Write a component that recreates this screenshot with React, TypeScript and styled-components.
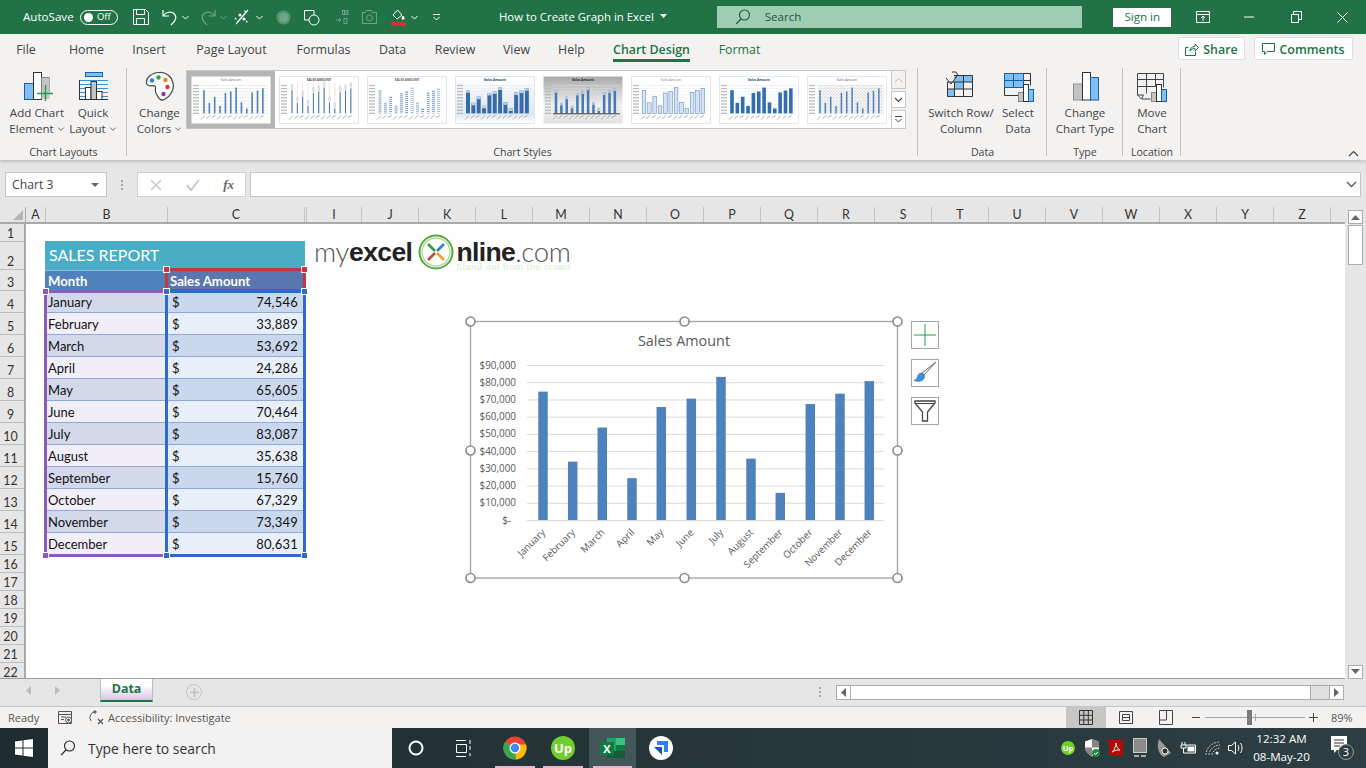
import React from "react";
import styled, { createGlobalStyle } from "styled-components";

const UI = `"Open Sans", "Noto Sans", sans-serif`;
const CELL = `Lato, "Liberation Sans", sans-serif`;
const GREEN = "#217346";

const Global = createGlobalStyle`
  html, body { margin: 0; padding: 0; background: #fff; overflow: hidden; }
  * { box-sizing: border-box; }
  svg { display: block; flex: none; }
`;

const Page = styled.div`
  width: 1366px; height: 768px; overflow: hidden; display: flex; flex-direction: column;
  font-family: ${UI}; color: #444;
`;

/* ---------- title bar ---------- */
const TitleBar = styled.div`
  height: 34px; flex: none; background: ${GREEN}; color: #fff; display: flex; align-items: center; padding-left: 23px;
  font-size: 11.6px;
`;
const AutoSave = styled.span` width: 52px; white-space: nowrap; padding-bottom: 2px; `;
const Toggle = styled.div`
  margin-left: 5px; width: 38px; height: 15px; border: 1px solid #fff; border-radius: 8px; display: flex; align-items: center;
  padding-left: 3px; gap: 4px; font-size: 9.5px; line-height: 1;
  &::before { content: ""; width: 9px; height: 9px; border-radius: 50%; background: #fff; }
`;
const Qat = styled.div<{ $ml: number; $w: number; $dim?: boolean }>`
  margin-left: ${p => p.$ml}px; width: ${p => p.$w}px; display: flex; justify-content: center; opacity: ${p => (p.$dim ? 0.35 : 1)};
`;
const DocTitle = styled.div`
  margin-left: 58px; width: 169px; display: flex; align-items: center; gap: 6px; white-space: nowrap; font-size: 11.4px; padding-bottom: 2px;
`;
const SearchBox = styled.div`
  margin-left: 49px; width: 366px; height: 22px; background: #9fcdb3; color: #1c5a38; display: flex; align-items: center;
  padding: 0 0 1px 18px; gap: 14px; font-size: 11.6px;
`;
const SignIn = styled.div`
  margin-left: 31px; width: 58px; height: 19px; background: #fff; color: ${GREEN}; font-size: 11.6px; display: flex; align-items: center; justify-content: center; padding-bottom: 1px;
`;
const WinBtn = styled.div<{ $ml?: number }>`
  margin-left: ${p => p.$ml || 0}px; width: 46.5px; display: flex; justify-content: center;
`;

/* ---------- tabs ---------- */
const TabsRow = styled.div`
  height: 32px; flex: none; background: #f3f2f1; display: flex; align-items: flex-start; padding-left: 17px; gap: 28px; position: relative;
`;
const Tab = styled.div<{ $w: number; $active?: boolean; $green?: boolean; $ml?: number }>`
  width: ${p => p.$w}px; margin-left: ${p => p.$ml || 0}px; height: 28px; line-height: 32px; text-align: center; white-space: nowrap; display: flex; justify-content: center;
  font-size: 12.4px; color: ${p => (p.$green ? GREEN : "#444")}; font-weight: ${p => (p.$active ? 600 : 400)};
  border-bottom: ${p => (p.$active ? `3px solid ${GREEN}` : "none")};
`;
const TabActions = styled.div`
  margin-left: auto; display: flex; gap: 9px; padding: 3px 13px 0 0;
`;
const ActionBtn = styled.div<{ $w: number }>`
  width: ${p => p.$w}px; height: 23px; background: #fff; border: 1px solid #e1dfdd; border-radius: 2px; color: ${GREEN}; font-size: 12.4px; font-weight: 600;
  display: flex; align-items: center; justify-content: center; gap: 4px; padding-top: 1px;
`;

/* ---------- ribbon ---------- */
const Ribbon = styled.div`
  height: 94px; flex: none; background: #f3f2f1; display: flex; box-shadow: 0 2px 3px rgba(0,0,0,.16); position: relative; z-index: 1;
`;
const Group = styled.div<{ $w: number }>`
  width: ${p => p.$w}px; flex: none; display: flex; flex-direction: column; position: relative;
  &::after { content: ""; position: absolute; right: 0; top: 2px; bottom: 4px; width: 1px; background: #c6c4c2; }
`;
const GroupBody = styled.div<{ $pl?: number }>` flex: 1; display: flex; padding-left: ${p => p.$pl || 0}px; `;
const GroupLabel = styled.div`
  height: 16px; line-height: 16px; text-align: center; font-size: 10.6px; color: #444; white-space: nowrap;
`;
const RBtn = styled.div<{ $w: number }>`
  width: ${p => p.$w}px; flex: none; display: flex; flex-direction: column; align-items: center; padding-top: 5px; font-size: 11.6px; color: #444;
`;
const RIcon = styled.div` height: 32px; margin-bottom: 2px; display: flex; justify-content: center; `;
const RLine = styled.div`
  height: 16px; line-height: 16px; white-space: nowrap; display: flex; align-items: center; gap: 3px;
`;
const Gallery = styled.div`
  margin-top: 4px; width: 720px; height: 59px; border: 1px solid #c8c6c4; border-width: 1px 0 1px 0; border-left: 1px solid #c8c6c4; background: #fff; display: flex; flex: none; position: relative;
`;
const ThumbSlot = styled.div<{ $sel?: boolean }>`
  width: 88px; height: 57px; background: ${p => (p.$sel ? "#b5b5b5" : "#fff")}; display: flex; align-items: center; justify-content: center; flex: none;
`;
const Scroller = styled.div`
  margin-left: auto; width: 15px; display: flex; flex-direction: column; gap: 2px; background: #f3f2f1; margin-top: -1px; margin-bottom: -1px;
`;
const ScrollKey = styled.div<{ $h: number; $dim?: boolean }>`
  height: ${p => p.$h}px; border: 1px solid #c8c6c4; background: ${p => (p.$dim ? "#f3f2f1" : "#fff")}; display: flex; align-items: center; justify-content: center;
`;
const Collapse = styled.div` position: absolute; right: 7px; bottom: 3px; `;

/* ---------- formula bar ---------- */
const FormulaBar = styled.div`
  height: 47px; flex: none; background: #e6e6e6; display: flex; align-items: flex-start; padding: 12px 5px 0; 
`;
const NameBox = styled.div`
  width: 102px; height: 25px; background: #fff; border: 1px solid #c6c6c6; display: flex; align-items: center; justify-content: space-between;
  padding: 0 7px 0 6px; font-size: 12.2px; color: #444;
`;
const Caret = styled.span`
  width: 0; height: 0; border-left: 4px solid transparent; border-right: 4px solid transparent; border-top: 4px solid #666;
`;
const Grip = styled.div`
  width: 30px; height: 25px; display: flex; flex-direction: column; align-items: center; justify-content: center; gap: 2px;
  & > i { width: 2px; height: 2px; background: #a6a6a6; }
`;
const FxBox = styled.div`
  width: 109px; height: 25px; background: #fff; border: 1px solid #d0d0d0; display: flex; align-items: center; justify-content: space-between; padding: 0 11px 0 12px;
  font-family: "Liberation Serif", serif; font-style: italic; font-weight: 700; font-size: 13px; color: #666;
`;
const FormulaInput = styled.div`
  margin-left: 4px; flex: 1; height: 25px; background: #fff; border: 1px solid #c6c6c6; display: flex; align-items: center; justify-content: flex-end; padding-right: 3px;
`;

/* ---------- sheet ---------- */
const SheetArea = styled.div` height: 472px; flex: none; display: flex; background: #fff; `;
const SheetMain = styled.div` width: 1345px; flex: none; display: flex; flex-direction: column; overflow: hidden; border-bottom: 1px solid #9e9e9e; `;
const ColRow = styled.div`
  height: 17px; flex: none; display: flex; background: #e6e6e6; border-bottom: 2px solid #a9a9a9; overflow: hidden;
`;
const Corner = styled.div`
  width: 26px; flex: none; position: relative; border-right: 1px solid #a9a9a9;
  &::after { content: ""; position: absolute; right: 2px; bottom: 2px; border-left: 10px solid transparent; border-bottom: 10px solid #b5b5b5; }
`;
const ColHead = styled.div<{ $w: number }>`
  width: ${p => p.$w}px; flex: none; text-align: center; font: 12.4px/15px ${CELL}; color: #333; border-right: 1px solid #c4c4c4;
`;
const SheetBody = styled.div` flex: 1; display: flex; min-height: 0; `;
const RowHeads = styled.div`
  width: 26px; flex: none; background: #e6e6e6; border-right: 2px solid #a9a9a9; display: flex; flex-direction: column;
`;
const RowHead = styled.div<{ $h: number }>`
  height: ${p => p.$h}px; flex: none; border-bottom: 1px solid #bdbdbd; text-align: center; font: 12.4px/1 ${CELL}; color: #333;
  display: flex; align-items: flex-end; justify-content: center; padding-bottom: 1px; padding-right: 3px;
`;
const Canvas = styled.div` position: relative; flex: 1; overflow: hidden; background: #fff; padding: 17px 0 0 19px; `;
const Report = styled.div`
  width: 260px; display: grid; grid-template-columns: 120px 140px; grid-template-rows: 29px 21px repeat(12, 22px); font: 13px/1 ${CELL}; color: #111;
`;
const ReportTitle = styled.div`
  grid-column: 1 / span 2; background: #4bacc6; color: #fff; font-size: 16px; display: flex; align-items: center; padding: 0 0 2px 4px;
`;
const HeadCell = styled.div<{ $alt?: boolean }>`
  background: ${p => (p.$alt ? "#5b76ae" : "#4f81bd")}; color: #fff; font-weight: 700; font-size: 13.2px; display: flex; align-items: center; padding: 1px 0 0 3px; border-top: 1px solid #9bb7da;
  margin-left: ${p => (p.$alt ? 2 : 0)}px; margin-right: ${p => (p.$alt ? 2 : 0)}px;
`;
const NameCell = styled.div<{ $odd: boolean }>`
  background: ${p => (p.$odd ? "#d3d8ea" : "#f1eef8")}; border-bottom: 1px solid #8eaadb; display: flex; align-items: center; padding: 2px 0 0 3px;
`;
const AmountCell = styled.div<{ $odd: boolean }>`
  background: ${p => (p.$odd ? "#c9d8ec" : "#e8eff9")}; border-bottom: 1px solid #8eaadb; display: flex; align-items: center; justify-content: space-between; padding: 2px 5px 0 5px; margin: 0 2px; letter-spacing: .2px;
`;
const SelBox = styled.div<{ $c: string; $l: number; $t: number; $w: number; $h: number; $noRight?: boolean }>`
  position: absolute; left: ${p => p.$l}px; top: ${p => p.$t}px; width: ${p => p.$w}px; height: ${p => p.$h}px; border: 3px solid ${p => p.$c};
  ${p => (p.$noRight ? "border-right: none;" : "")} pointer-events: none;
`;
const SelHandle = styled.i<{ $c: string; $x: "l" | "r"; $y: "t" | "b" }>`
  position: absolute; width: 7px; height: 7px; background: ${p => p.$c}; border: 1px solid #fff;
  ${p => (p.$x === "l" ? "left: -5px;" : "right: -5px;")} ${p => (p.$y === "t" ? "top: -5px;" : "bottom: -5px;")}
`;
const Logo = styled.div`
  position: absolute; left: 288px; top: 11px; width: 262px; height: 34px; display: flex; align-items: center; font-family: "Liberation Sans", sans-serif; font-size: 26.5px; line-height: 20px; letter-spacing: -.6px; color: #222;
`;
const Thin = styled.span` font-family: Lato, sans-serif; font-weight: 300; font-size: 27.5px; letter-spacing: -.3px; color: #555; `;
const Bold = styled.span` font-weight: 700; color: #222; `;
const Tagline = styled.span`
  position: absolute; left: 142px; top: 27px; font-size: 9px; letter-spacing: .6px; color: #d3ecd3; white-space: nowrap; line-height: 10px;
`;
const ChartFloat = styled.div` position: absolute; left: 439px; top: 92px; width: 480px; height: 270px; `;
const ChartBtn = styled.div<{ $top: number }>`
  position: absolute; left: 446px; top: ${p => p.$top}px; width: 28px; height: 28px; background: #fff; border: 1px solid #a6a6a6; display: flex; align-items: center; justify-content: center;
`;
const VScroll = styled.div`
  width: 21px; flex: none; background: #e6e6e6; display: flex; flex-direction: column; align-items: center; padding: 3px 0 0 0;
`;
const VBtn = styled.div`
  width: 15px; height: 14px; flex: none; background: #fff; border: 1px solid #ababab; display: flex; align-items: center; justify-content: center;
`;
const VThumb = styled.div` width: 15px; height: 40px; flex: none; margin-top: 1px; background: #fff; border: 1px solid #ababab; `;
const VTrack = styled.div` flex: 1; `;

/* ---------- sheet tabs ---------- */
const SheetTabs = styled.div`
  height: 28px; flex: none; background: #e6e6e6; display: flex; align-items: flex-start; border-bottom: 1px solid #c6c6c6; position: relative;
`;
const NavSlot = styled.div` width: 100px; height: 22px; display: flex; align-items: center; padding-left: 26px; gap: 22px; flex: none; `;
const DataTab = styled.div`
  width: 53px; height: 23px; background: linear-gradient(#fff 30%, #d7c6e6); border-bottom: 2px solid ${GREEN}; border-left: 1px solid #bdbdbd; border-right: 1px solid #bdbdbd;
  color: ${GREEN}; font: 700 12.4px/20px ${UI}; text-align: center;
`;
const AddSheet = styled.div`
  margin-left: 33px; margin-top: 5px; width: 16px; height: 16px; border-radius: 50%; border: 1.5px solid #c4c4c4; color: #c0c0c0; display: flex; align-items: center; justify-content: center;
`;
const SplitDots = styled.div`
  margin-left: 617px; margin-top: 8px; width: 3px; display: flex; flex-direction: column; gap: 2px;
  & > i { width: 2px; height: 2px; background: #a6a6a6; }
`;
const HScroll = styled.div`
  margin-left: 14px; margin-top: 6px; width: 508px; height: 15px; display: flex; border: 1px solid #ababab; background: #e0e0e0;
`;
const HEnd = styled.div` width: 14px; background: #fff; display: flex; align-items: center; justify-content: center; flex: none; border-right: 1px solid #ababab; `;
const HEndR = styled(HEnd)` border-right: none; border-left: 1px solid #ababab; margin-left: auto; `;
const HThumb = styled.div` width: 460px; background: #fff; border-right: 1px solid #ababab; flex: none; `;

/* ---------- status ---------- */
const StatusBar = styled.div`
  height: 21px; flex: none; background: #f3f2f1; display: flex; align-items: center; padding-left: 8px; font-size: 11px; color: #555; position: relative;
`;
const StatusText = styled.span<{ $ml?: number; $w?: number }>` margin-left: ${p => p.$ml || 0}px; white-space: nowrap; width: ${p => (p.$w ? p.$w + "px" : "auto")}; `;
const ViewTools = styled.div` margin-left: auto; width: 300px; height: 21px; display: flex; align-items: center; `;
const ViewBtn = styled.div<{ $on?: boolean }>`
  width: 40px; height: 21px; background: ${p => (p.$on ? "#c8c6c4" : "transparent")}; display: flex; align-items: center; justify-content: center; flex: none;
`;
const ZoomSlider = styled.div`
  width: 100px; height: 1px; background: #a6a6a6; position: relative; margin: 0 4px 0 5px; flex: none;
  &::before { content: ""; position: absolute; left: 42px; top: -7px; width: 5px; height: 15px; background: #7a7a7a; }
  &::after { content: ""; position: absolute; left: 50px; top: -3px; width: 1px; height: 7px; background: #a6a6a6; }
`;

/* ---------- taskbar ---------- */
const Taskbar = styled.div`
  height: 40px; flex: none; background: linear-gradient(90deg, #1e2b2f 0%, #243437 40%, #2d3f43 100%); display: flex; align-items: center; color: #fff; position: relative;
`;
const WinKey = styled.div` width: 48px; height: 40px; display: flex; align-items: center; justify-content: center; flex: none; `;
const TaskSearch = styled.div`
  width: 344px; height: 40px; background: #f2f2f2; color: #333; display: flex; align-items: center; padding-left: 12px; gap: 12px; font-size: 13.9px; flex: none;
`;
const TaskItem = styled.div<{ $w: number; $on?: boolean; $pink?: boolean; $ml?: number }>`
  width: ${p => p.$w}px; height: 40px; margin-left: ${p => p.$ml || 0}px; flex: none; display: flex; align-items: center; justify-content: center; position: relative;
  background: ${p => (p.$on ? "#435659" : "transparent")};
  ${p => (p.$pink ? `&::after { content: ""; position: absolute; left: 4px; right: 4px; bottom: 0; height: 2px; background: #eeb4cc; }` : "")}
`;
const Tray = styled.div` margin-left: auto; display: flex; align-items: center; height: 40px; `;
const TrayItem = styled.div<{ $w: number }>` width: ${p => p.$w}px; display: flex; justify-content: center; flex: none; `;
const Clock = styled.div`
  width: 69px; flex: none; text-align: center; font-size: 11.6px; line-height: 18px; white-space: nowrap;
`;
const Notify = styled.div` width: 50px; flex: none; display: flex; justify-content: center; padding-left: 4px; `;

/* ---------- icons ---------- */
const Chev = ({ c = "#fff", s = 9 }: { c?: string; s?: number }) => (
  <svg width={s} height={s} viewBox="0 0 9 9"><path d="M1.5 3l3 3 3-3" fill="none" stroke={c} strokeWidth="1" /></svg>
);
const SaveIcon = () => (
  <svg width="16" height="16" viewBox="0 0 16 16" fill="none" stroke="#fff"><path d="M.5.5h12l3 3v12H.5z" /><path d="M3.5.5v5h8v-5M3.5 15.5v-6h8v6" /></svg>
);
const UndoIcon = ({ flip }: { flip?: boolean }) => (
  <svg width="16" height="17" viewBox="0 0 16 17" fill="none" stroke="#fff" strokeWidth="1.2" style={flip ? { transform: "scaleX(-1)" } : undefined}>
    <path d="M1 1v6h6M1.5 6.5C4 3 9 2 12 4.5c3 3 2.5 7-3 11.5" />
  </svg>
);
const TouchIcon = () => (
  <svg width="16" height="16" viewBox="0 0 16 16" fill="none" stroke="#fff" strokeWidth="1.2"><path d="M14 1L2 15" /><circle cx="6" cy="6" r="1" fill="#fff" /><circle cx="10" cy="10" r="1" fill="#fff" /><path d="M1 9l2 2M10 2l3 1M12 12l2 2" strokeDasharray="2 1" /></svg>
);
const ShapesIcon = () => (
  <svg width="17" height="17" viewBox="0 0 17 17" fill="none" stroke="#fff"><path d="M6 11H1.5V1.5H11V6" /><circle cx="11" cy="11" r="5" /></svg>
);
const NumIcon = () => (
  <svg width="14" height="16" viewBox="0 0 14 16" fill="none" stroke="#fff"><path d="M1 11h5m-2-2l2 2-2 2" /><rect x="7.5" y="1.5" width="2" height="4" /><rect x="11" y="1.5" width="2" height="4" /><rect x="9" y="9.5" width="3" height="5" /></svg>
);
const CameraIcon = () => (
  <svg width="15" height="14" viewBox="0 0 15 14" fill="none" stroke="#fff"><path d="M.5 2.500h3l1-2h5l1 2h4v11H.5z" /><circle cx="7.500" cy="8" r="3" /></svg>
);
const FillIcon = () => (
  <svg width="15" height="17" viewBox="0 0 15 17" fill="none" stroke="#fff"><path d="M6.500 1L2 6l4 4 5-4z" /><path d="M12 7c1 1.500 1.500 2.400 1 3s-2 .4-2-.6z" fill="#fff" /><rect x="0" y="13" width="15" height="4" fill="#d13438" stroke="none" /></svg>
);
const QatMore = () => (
  <svg width="9" height="9" viewBox="0 0 9 9" fill="none" stroke="#fff"><path d="M1 1.500h7M1.500 4l3 3 3-3" /></svg>
);
const SearchGlass = ({ c = "#1c5a38", s = 16 }: { c?: string; s?: number }) => (
  <svg width={s} height={s} viewBox="0 0 16 16" fill="none" stroke={c} strokeWidth="1.100"><circle cx="9.500" cy="6" r="5" /><path d="M6 10L1 15" /></svg>
);
const IconRibbonMode = () => (
  <svg width="14" height="12" viewBox="0 0 14 12" fill="none" stroke="#fff"><path d="M.5.500h13v11H.5zM.5 3.500h13M7 10V5.500M5 7l2-2 2 2" /></svg>
);
const IconMin = () => <svg width="11" height="3" viewBox="0 0 11 3"><path d="M0 1h10" stroke="#fff" /></svg>;
const IconRestore = () => (
  <svg width="11" height="12" viewBox="0 0 11 12" fill="none" stroke="#fff"><path d="M.5 3.500h7v8h-7zM2.500 3V.5h8v8H8" /></svg>
);
const IconClose = () => <svg width="11" height="11" viewBox="0 0 11 11"><path d="M.5.5l10 10M10.500.5l-10 10" stroke="#fff" /></svg>;
const ShareIcon = () => (
  <svg width="14" height="14" viewBox="0 0 14 14" fill="none" stroke={GREEN}><path d="M.5 5.500v8h10v-4M.5 5.500h3M5 9c0-3 2-4.500 5-4.500V2l3.500 3.500L10 9V6.500C8 6.500 6 7 5 9z" /></svg>
);
const CommentIcon = () => (
  <svg width="13" height="13" viewBox="0 0 13 13" fill="none" stroke={GREEN}><path d="M.5.5h12v8H5l-2.500 3v-3h-2z" /></svg>
);

const AddChartIcon = () => (
  <svg width="32" height="32" viewBox="0 0 32 32">
    <rect x="3.500" y="12.500" width="9" height="16" fill="#83bef0" stroke="#0f62ae" />
    <rect x="12.500" y="1.500" width="8" height="27" fill="#fff" stroke="#333" />
    <path d="M20.500 6.500h8v15" fill="#c4c4c4" stroke="#8a8a8a" />
    <rect x="20.500" y="7" width="8" height="21" fill="#c4c4c4" />
    <path d="M24.500 14v16M16 22.500h17" stroke="#1f9a4f" strokeWidth="1.400" />
  </svg>
);
const QuickLayoutIcon = () => (
  <svg width="32" height="32" viewBox="0 0 32 32" fill="none">
    <rect x="8.500" y="1.500" width="17" height="4" fill="#83bef0" stroke="#0f62ae" />
    <path d="M2 13.500h29M2 17.500h29M2 9.500h29M2 21.500h29M2 25.500h29" stroke="#3d8fd8" />
    <path d="M2.500 9v20M2 28.500h29" stroke="#333" />
    <rect x="8.500" y="16.500" width="5.500" height="12" fill="#fff" stroke="#333" />
    <rect x="14" y="10.500" width="5.500" height="18" fill="#c4c4c4" stroke="#333" />
    <rect x="19.500" y="20.500" width="5.500" height="8" fill="#fff" stroke="#333" />
  </svg>
);
const PaletteIcon = () => (
  <svg width="30" height="31" viewBox="0 0 30 31" fill="none">
    <path d="M14 1.500C6 2 1 7 1.500 12c.4 3 3 3 5.500 2.700 3-.2 4 1 3.500 3.300-.6 3 .5 4.500 2 7 1.500 3 4 5 7 3.500 6-3 10-10 8.500-16.500C26.500 5 21 1 14 1.500z" fill="#fff" stroke="#444" strokeWidth="1.200" />
    <circle cx="7" cy="9.500" r="2.200" fill="#2f7fd1" /><circle cx="13.500" cy="6.500" r="2.200" fill="#2fa14a" />
    <circle cx="20.500" cy="9" r="2.200" fill="#e8821e" /><circle cx="22.500" cy="16" r="2.200" fill="#e23434" /><circle cx="18.500" cy="23" r="2.200" fill="#8a3bb0" />
  </svg>
);
const SwitchIcon = () => (
  <svg width="32" height="32" viewBox="0 0 32 32" fill="none">
    <path d="M18 4h9.500v7h-9.500zM9 11h9.500v7H9zM2 18h7.500v7.500H2z" fill="#83bef0" /><path d="M9 4h9v7H9z" fill="#83bef0" />
    <path d="M2.500 11v14.500h25V4.500H9M2.500 18h25M2.500 11h25M9.500 11v14.500M18.500 4.500v21" stroke="#333" />
    <path d="M1 7l5 6 6-8M7 1h4l2 3-3 3" stroke="#333" fill="none" />
  </svg>
);
const SelectDataIcon = () => (
  <svg width="32" height="32" viewBox="0 0 32 32" fill="none">
    <path d="M2 2h20v15H2z" fill="#83bef0" />
    <path d="M2.500 2.500h26v12M2.500 2.500v22h14M2.500 9.500h26M2.500 16.500h16M11.500 2.500v14M21.500 2.500v12" stroke="#333" />
    <path d="M2.500 2.500h19v14h-19zM2.500 9.500h19M11.500 2.500v14" stroke="#0f62ae" />
    <rect x="16.500" y="21.500" width="5" height="9" fill="#c4c4c4" stroke="#888" />
    <rect x="21.500" y="13.500" width="5" height="17" fill="#fff" stroke="#333" />
    <rect x="26.500" y="18.500" width="5" height="12" fill="#83bef0" stroke="#0f62ae" />
  </svg>
);
const ChartTypeIcon = () => (
  <svg width="32" height="32" viewBox="0 0 32 32">
    <rect x="4.500" y="13" width="9" height="16" fill="#c4c4c4" stroke="#8a8a8a" />
    <rect x="13.500" y="1.500" width="8" height="27.500" fill="#fff" stroke="#333" />
    <rect x="21.500" y="6.500" width="8" height="22.500" fill="#83bef0" stroke="#0f62ae" />
  </svg>
);
const MoveChartIcon = () => (
  <svg width="32" height="32" viewBox="0 0 32 32" fill="none">
    <path d="M1.500 2.500h26v14M1.500 2.500V24l4 4h9M1.500 24h6l-2 4M1.500 8.500h26M1.500 15.500h18M10.500 2.500v20M19.500 2.500v13" stroke="#444" />
    <rect x="15.500" y="21.500" width="5" height="9" fill="#c4c4c4" stroke="#888" />
    <rect x="20.500" y="13.500" width="5" height="17" fill="#fff" stroke="#333" />
    <rect x="25.500" y="18.500" width="5" height="12" fill="#83bef0" stroke="#0f62ae" />
  </svg>
);

/* ---------- thumbnails ---------- */
const VALUES = [74546, 33889, 53692, 24286, 65605, 70464, 83087, 35638, 15760, 67329, 73349, 80631];
const MONTHS = ["January","February","March","April","May","June","July","August","September","October","November","December"];

type Look = { bg: string; title: string; tc: string; w: number; fill: string; stroke?: string; grid: string; dash?: string; hatch?: boolean; drop?: boolean; cap?: boolean; axis?: string; frame?: string; bold?: boolean };
const LOOKS: Look[] = [
  { bg: "#fff", title: "Sales Amount", tc: "#777", w: 1.600, fill: "#4f81bd", grid: "#dcdcdc" },
  { bg: "#fff", title: "SALES AMOUNT", tc: "#555", w: 1, fill: "#3d70b4", grid: "#fff", drop: true, frame: "#dfe6ef", bold: true },
  { bg: "#fff", title: "SALES AMOUNT", tc: "#666", w: 2.400, fill: "#4f81bd", grid: "#fff", dash: "1.300 .7", frame: "#dfe6ef", bold: true },
  { bg: "url(#g4)", title: "Sales Amount", tc: "#345", w: 4, fill: "#366ba8", grid: "#e4e8ee", cap: true, bold: true, frame: "#dfe6ef" },
  { bg: "url(#g5)", title: "Sales Amount", tc: "#222", w: 2.500, fill: "#4479b4", grid: "#d8d8d8", cap: true, axis: "#333", bold: true },
  { bg: "#fff", title: "Sales Amount", tc: "#888", w: 3.600, fill: "#d5e3f3", stroke: "#4f81bd", grid: "#e8e8e8", frame: "#dfe6ef" },
  { bg: "#fff", title: "Sales Amount", tc: "#1f4e86", w: 3.600, fill: "#336cb0", grid: "#dbe8f5", frame: "#dfe9f7", bold: true },
  { bg: "#fff", title: "Sales Amount", tc: "#666", w: 1.500, fill: "#4f81bd", grid: "#d8d8d8", hatch: true, frame: "#dfe9f7" },
];
const Thumb = ({ look }: { look: Look }) => (
  <svg width="80" height="48" viewBox="0 0 80 48">
    <defs>
      <linearGradient id="g4" x1="0" y1="0" x2="0" y2="1"><stop offset="0" stopColor="#fff" /><stop offset=".8" stopColor="#dfe7f1" /><stop offset="1" stopColor="#fff" /></linearGradient>
      <linearGradient id="g5" x1="0" y1="0" x2="0" y2="1"><stop offset="0" stopColor="#a9a9a9" /><stop offset=".6" stopColor="#f2f2f2" /><stop offset="1" stopColor="#e2e2e2" /></linearGradient>
      <pattern id="hatch" width="3" height="3" patternUnits="userSpaceOnUse"><path d="M0 0l3 3M3 0L0 3" stroke="#c9c9c9" strokeWidth=".4" /></pattern>
    </defs>
    <rect x=".5" y=".5" width="79" height="47" fill={look.bg} stroke={look.frame || "none"} />
    <text x="40" y="5" textAnchor="middle" fontSize="3.200" fontFamily={UI} fontWeight={look.bold ? 700 : 400} fill={look.tc}>{look.title}</text>
    {look.hatch && <rect x="11" y="9" width="65" height="28" fill="url(#hatch)" />}
    {Array.from({ length: 10 }, (_, i) => (
      <React.Fragment key={i}>
        <path d={`M10 ${9.500 + i * 3.100}H77`} stroke={look.grid} strokeWidth=".6" />
        <rect x="2" y={8.800 + i * 3.100} width="6" height="1.300" fill="#bbb" />
      </React.Fragment>
    ))}
    {VALUES.map((v, i) => {
      const x = 13 + i * 5.350;
      const h = (v / 90000) * 28;
      const top = 37.400 - h;
      return (
        <React.Fragment key={i}>
          {look.drop && <path d={`M${x} 7V37`} stroke="#c8c8c8" strokeWidth=".4" />}
          <rect x={x - look.w / 2} y={top} width={look.w} height={h} fill={look.fill} stroke={look.stroke || "none"} strokeWidth=".5" />
          {look.dash && <path d={`M${x} ${top}V37.400`} stroke="#fff" strokeWidth={look.w} strokeDasharray={look.dash} strokeDashoffset="-1.300" />}
          {look.drop && <rect x={x - 1.200} y={top - 6} width="2.400" height="5" fill="#ddd" />}
          {look.cap && <rect x={x - look.w / 2} y={top} width={look.w} height="2.500" fill="#b9cde6" />}
          <path d={`M${x + 1} 39.500L${x - 3} ${43.500 - (i % 3)}`} stroke="#a8a8a8" strokeWidth=".9" />
        </React.Fragment>
      );
    })}
    {look.axis && <path d="M10 37.800H77" stroke={look.axis} strokeWidth=".9" />}
  </svg>
);

/* ---------- chart ---------- */
const OX = 465, OY = 316;
const ChartDrawing = () => {
  const yFor = (v: number) => 520 - (v / 90000) * 155 - OY;
  const xs = [543, 572.700, 602.300, 632, 661.300, 691.300, 721, 751, 780.300, 810.300, 840, 869.300];
  const handles = [[470.500, 321.500], [684.500, 321.500], [897.500, 321.500], [470.500, 450.500], [897.500, 450.500], [470.500, 578], [684.500, 578], [897.500, 578]];
  return (
    <svg width="440" height="270" viewBox="0 0 440 270" style={{ position: "absolute", left: 0, top: 0 }}>
      <rect x={470.500 - OX} y={321.500 - OY} width="427" height="256.500" fill="#fff" stroke="#a6a6a6" strokeWidth="1.400" />
      <text x={684 - OX} y={346 - OY} textAnchor="middle" fontSize="14.400" fontFamily={UI} fill="#595959">Sales Amount</text>
      {Array.from({ length: 10 }, (_, i) => {
        const v = (9 - i) * 10000;
        const y = yFor(v);
        return (
          <React.Fragment key={v}>
            <path d={`M${527 - OX} ${y + 0.500}H${884 - OX}`} stroke="#d9d9d9" />
            <text x={(v ? 516 : 511) - OX} y={y + 3.500} textAnchor="end" fontSize="9.900" fontFamily={UI} fill="#595959">{v ? `$${(v / 1000).toFixed(0)},000` : "$-"}</text>
          </React.Fragment>
        );
      })}
      {VALUES.map((v, i) => (
        <rect key={i} x={xs[i] - 4.750 - OX} y={yFor(v)} width="9.500" height={520 - OY - yFor(v)} fill="#4f81bd" />
      ))}
      {MONTHS.map((m, i) => {
        const x = xs[i] + 3 - OX, y = 533 - OY;
        return <text key={m} x={x} y={y} textAnchor="end" fontSize="9.800" fontFamily={UI} fill="#595959" transform={`rotate(-45 ${x} ${y})`}>{m}</text>;
      })}
      {handles.map(([x, y]) => (
        <circle key={`${x}-${y}`} cx={x - OX} cy={y - OY} r="4.500" fill="#fff" stroke="#8f8f8f" strokeWidth="1.700" />
      ))}
    </svg>
  );
};

/* ---------- taskbar icons ---------- */
const WinLogo = () => (
  <svg width="18" height="18" viewBox="0 0 18 18" fill="#fff"><path d="M0 2.500l7.500-1v7H0zM8.500 1.300L18 0v8.500H8.500zM0 9.500h7.500v7L0 15.500zM8.500 9.500H18V18l-9.500-1.300z" /></svg>
);
const ChromeIcon = () => (
  <svg width="24" height="24" viewBox="0 0 24 24">
    <circle cx="12" cy="12" r="11.500" fill="#ea4335" />
    <path d="M12 12L2 18a11.500 11.500 0 0 1 0-12z" fill="#34a853" /><path d="M12 12L2 18a11.500 11.500 0 0 0 11 5.500z" fill="#34a853" />
    <path d="M12 12l1 11.500A11.500 11.500 0 0 0 23 8.500H12z" fill="#fbbc05" />
    <circle cx="12" cy="12" r="5.500" fill="#fff" /><circle cx="12" cy="12" r="4.200" fill="#4285f4" />
  </svg>
);
const UpBadge = ({ s }: { s: number }) => (
  <svg width={s} height={s} viewBox="0 0 24 24">
    <circle cx="12" cy="12" r="12" fill="#6fcf2d" />
    <text x="12" y="16.500" textAnchor="middle" fontSize="13" fontWeight="700" fontFamily={UI} fill="#fff">Up</text>
  </svg>
);
const ExcelIcon = () => (
  <svg width="26" height="24" viewBox="0 0 26 24">
    <rect x="7" y="2" width="18" height="20" fill="#21a366" /><rect x="16" y="2" width="9" height="7" fill="#33c481" /><rect x="7" y="15" width="18" height="7" fill="#185c37" /><rect x="16" y="9" width="9" height="6" fill="#107c41" />
    <rect x="0" y="6" width="14" height="13" fill="#107c41" />
    <text x="7" y="16.500" textAnchor="middle" fontSize="11" fontWeight="700" fontFamily={UI} fill="#fff">X</text>
  </svg>
);
const SnipIcon = () => (
  <svg width="24" height="24" viewBox="0 0 24 24">
    <circle cx="12" cy="12" r="12" fill="#fff" />
    <path d="M8 5h11v11h-4V9H8z" fill="#2f80e8" /><path d="M13 11v8L5 11z" fill="#1559b8" />
  </svg>
);

const rowHeights: [string, number][] = [["1", 18], ["2", 28], ["3", 21], ...Array.from({ length: 12 }, (_, i) => [String(i + 4), 22] as [string, number]), ...Array.from({ length: 7 }, (_, i) => [String(i + 16), 18] as [string, number])];
const columns: [string, number][] = [["A", 20], ["B", 122], ["C", 137], ["", 2], ["I", 55], ..."JKLMNOPQRSTUVWXYZ".split("").map(c => [c, 57] as [string, number]), ["", 57]];
const TABS: [string, number, number][] = [["Home", 35, 6], ["Insert", 32, 1], ["Page Layout", 71, 3], ["Formulas", 53, 2], ["Data", 27, 1], ["Review", 40, 1], ["View", 27, 0], ["Help", 27, 0]];

export default function App() {
  return (
    <Page>
      <Global />
      <TitleBar>
        <AutoSave>AutoSave</AutoSave>
        <Toggle>Off</Toggle>
        <Qat $ml={15} $w={16}><SaveIcon /></Qat>
        <Qat $ml={14} $w={15}><UndoIcon /></Qat>
        <Qat $ml={3} $w={9}><Chev /></Qat>
        <Qat $ml={10} $w={16} $dim><UndoIcon flip /></Qat>
        <Qat $ml={3} $w={9} $dim><Chev /></Qat>
        <Qat $ml={7} $w={15}><TouchIcon /></Qat>
        <Qat $ml={5} $w={9}><Chev /></Qat>
        <Qat $ml={12} $w={15} $dim><svg width="15" height="15" viewBox="0 0 15 15"><circle cx="7.500" cy="7.500" r="7" fill="#fff" opacity=".7" /><circle cx="7.500" cy="7.500" r="4.500" fill="#fff" /></svg></Qat>
        <Qat $ml={12} $w={17}><ShapesIcon /></Qat>
        <Qat $ml={15} $w={14} $dim><NumIcon /></Qat>
        <Qat $ml={14} $w={14} $dim><CameraIcon /></Qat>
        <Qat $ml={15} $w={14}><FillIcon /></Qat>
        <Qat $ml={4} $w={9}><Chev /></Qat>
        <Qat $ml={13} $w={9}><QatMore /></Qat>
        <DocTitle>How to Create Graph in Excel<svg width="7" height="4" viewBox="0 0 7 4"><path d="M0 0h7L3.500 4z" fill="#fff" /></svg></DocTitle>
        <SearchBox><SearchGlass />Search</SearchBox>
        <SignIn>Sign in</SignIn>
        <WinBtn $ml={9}><IconRibbonMode /></WinBtn>
        <WinBtn><IconMin /></WinBtn>
        <WinBtn><IconRestore /></WinBtn>
        <WinBtn><IconClose /></WinBtn>
      </TitleBar>

      <TabsRow>
        <Tab $w={18}>File</Tab>
        {TABS.map(([t, w, ml]) => <Tab key={t} $w={w} $ml={ml}>{t}</Tab>)}
        <Tab $w={77} $active $green>Chart Design</Tab>
        <Tab $w={41} $ml={1} $green>Format</Tab>
        <TabActions>
          <ActionBtn $w={67}><ShareIcon />Share</ActionBtn>
          <ActionBtn $w={99}><CommentIcon />Comments</ActionBtn>
        </TabActions>
      </TabsRow>

      <Ribbon>
        <Group $w={127}>
          <GroupBody $pl={5}>
            <RBtn $w={64}><RIcon><AddChartIcon /></RIcon><RLine>Add Chart</RLine><RLine>Element<Chev c="#555" s={8} /></RLine></RBtn>
            <RBtn $w={48}><RIcon><QuickLayoutIcon /></RIcon><RLine>Quick</RLine><RLine>Layout<Chev c="#555" s={8} /></RLine></RBtn>
          </GroupBody>
          <GroupLabel>Chart Layouts</GroupLabel>
        </Group>
        <Group $w={791}>
          <GroupBody $pl={6}>
            <RBtn $w={53}><RIcon><PaletteIcon /></RIcon><RLine>Change</RLine><RLine>Colors<Chev c="#555" s={8} /></RLine></RBtn>
            <Gallery>
              {LOOKS.map((look, i) => (
                <ThumbSlot key={i} $sel={i === 0}>
                  <Thumb look={look} />
                </ThumbSlot>
              ))}
              <Scroller>
                <ScrollKey $h={20} $dim><svg width="9" height="6" viewBox="0 0 9 6"><path d="M1 5l3.500-3.500L8 5" fill="none" stroke="#bbb" /></svg></ScrollKey>
                <ScrollKey $h={17}><svg width="9" height="6" viewBox="0 0 9 6"><path d="M1 1l3.500 3.500L8 1" fill="none" stroke="#444" strokeWidth="1.200" /></svg></ScrollKey>
                <ScrollKey $h={20}><svg width="9" height="9" viewBox="0 0 9 9"><path d="M1 1.500h7M1.500 4l3 3 3-3" fill="none" stroke="#444" /></svg></ScrollKey>
              </Scroller>
            </Gallery>
          </GroupBody>
          <GroupLabel>Chart Styles</GroupLabel>
        </Group>
        <Group $w={129}>
          <GroupBody $pl={7}>
            <RBtn $w={72}><RIcon><SwitchIcon /></RIcon><RLine>Switch Row/</RLine><RLine>Column</RLine></RBtn>
            <RBtn $w={42}><RIcon><SelectDataIcon /></RIcon><RLine>Select</RLine><RLine>Data</RLine></RBtn>
          </GroupBody>
          <GroupLabel>Data</GroupLabel>
        </Group>
        <Group $w={76}>
          <GroupBody>
            <RBtn $w={76}><RIcon><ChartTypeIcon /></RIcon><RLine>Change</RLine><RLine>Chart Type</RLine></RBtn>
          </GroupBody>
          <GroupLabel>Type</GroupLabel>
        </Group>
        <Group $w={58}>
          <GroupBody>
            <RBtn $w={58}><RIcon><MoveChartIcon /></RIcon><RLine>Move</RLine><RLine>Chart</RLine></RBtn>
          </GroupBody>
          <GroupLabel>Location</GroupLabel>
        </Group>
        <Collapse><svg width="11" height="7" viewBox="0 0 11 7"><path d="M1 6l4.500-4.500L10 6" fill="none" stroke="#444" strokeWidth="1.200" /></svg></Collapse>
      </Ribbon>

      <FormulaBar>
        <NameBox>Chart 3<Caret /></NameBox>
        <Grip><i /><i /><i /></Grip>
        <FxBox>
          <svg width="12" height="12" viewBox="0 0 12 12"><path d="M1 1l10 10M11 1L1 11" stroke="#c8c8c8" strokeWidth="1.500" /></svg>
          <svg width="14" height="12" viewBox="0 0 14 12"><path d="M1 6l4 5 8-10" fill="none" stroke="#c8c8c8" strokeWidth="2" /></svg>
          <span>fx</span>
        </FxBox>
        <FormulaInput><svg width="11" height="7" viewBox="0 0 11 7"><path d="M1 1l4.500 4.500L10 1" fill="none" stroke="#555" strokeWidth="1.300" /></svg></FormulaInput>
      </FormulaBar>

      <SheetArea>
        <SheetMain>
          <ColRow>
            <Corner />
            {columns.map(([c, w], i) => <ColHead key={i} $w={w}>{c}</ColHead>)}
          </ColRow>
          <SheetBody>
            <RowHeads>
              {rowHeights.map(([r, h]) => <RowHead key={r} $h={h}>{r}</RowHead>)}
            </RowHeads>
            <Canvas>
              <Report>
                <ReportTitle>SALES REPORT</ReportTitle>
                <HeadCell>Month</HeadCell>
                <HeadCell $alt>Sales Amount</HeadCell>
                {MONTHS.map((m, i) => (
                  <React.Fragment key={m}>
                    <NameCell $odd={i % 2 === 0}>{m}</NameCell>
                    <AmountCell $odd={i % 2 === 0}><span>$</span><span>{VALUES[i].toLocaleString("en-US")}</span></AmountCell>
                  </React.Fragment>
                ))}
              </Report>
              <SelBox $c="#8a5cbf" $l={18} $t={66} $w={122} $h={267} $noRight>
                <SelHandle $c="#8a5cbf" $x="l" $y="t" /><SelHandle $c="#8a5cbf" $x="l" $y="b" />
              </SelBox>
              <SelBox $c="#c7353f" $l={139} $t={44} $w={141} $h={24}>
                <SelHandle $c="#c7353f" $x="l" $y="t" /><SelHandle $c="#c7353f" $x="r" $y="t" />
              </SelBox>
              <SelBox $c="#2f6cc9" $l={139} $t={66} $w={141} $h={267}>
                <SelHandle $c="#2f6cc9" $x="l" $y="t" /><SelHandle $c="#2f6cc9" $x="r" $y="t" />
                <SelHandle $c="#2f6cc9" $x="l" $y="b" /><SelHandle $c="#2f6cc9" $x="r" $y="b" />
              </SelBox>
              <Logo>
                <Thin>my</Thin><Bold>excel</Bold>
                <svg width="42" height="36" viewBox="0 0 42 36" style={{ margin: "0 -1px 0 3px" }}>
                  <circle cx="21" cy="18" r="16.500" fill="none" stroke="#58a83f" strokeWidth="2" />
                  <circle cx="21" cy="18" r="14" fill="none" stroke="#b5d9a8" strokeWidth="1.500" />
                  <path d="M13 10l7 7" stroke="#2d9a3e" strokeWidth="2.500" /><path d="M29 10l-7 7" stroke="#2a7fcf" strokeWidth="2.500" />
                  <path d="M13 26l7-7" stroke="#d63a2f" strokeWidth="2.500" /><path d="M29 26l-7-7" stroke="#efa21f" strokeWidth="2.500" />
                </svg>
                <Bold>nline</Bold><Thin>.com</Thin>
                <Tagline>Stand out from the crowd</Tagline>
              </Logo>
              <ChartFloat>
                <ChartDrawing />
                <ChartBtn $top={5}><svg width="22" height="22" viewBox="0 0 22 22"><path d="M11 0v22M0 11h22" stroke="#21a04f" /></svg></ChartBtn>
                <ChartBtn $top={43}>
                  <svg width="24" height="24" viewBox="0 0 24 24"><path d="M23 1L11 14l-2-2z" fill="#fff" stroke="#666" /><path d="M9 12c-3 0-4 2-4.500 4-.4 2-2 3-3.500 3.500 4 1.500 8.500 1 10-2 1-2 .5-4-2-5.500z" fill="#3f8fe0" stroke="#1d63a8" strokeWidth=".6" /></svg>
                </ChartBtn>
                <ChartBtn $top={81}>
                  <svg width="22" height="24" viewBox="0 0 22 24" fill="none"><path d="M1 2h20v2l-7.500 9v9h-5v-9L1 4z" stroke="#444" strokeWidth="1.300" /><path d="M1 4.500h20" stroke="#444" /></svg>
                </ChartBtn>
              </ChartFloat>
            </Canvas>
          </SheetBody>
        </SheetMain>
        <VScroll>
          <VBtn><svg width="9" height="6" viewBox="0 0 9 6"><path d="M0 6l4.500-5L9 6z" fill="#666" /></svg></VBtn>
          <VThumb />
          <VTrack />
          <VBtn><svg width="9" height="6" viewBox="0 0 9 6"><path d="M0 0l4.500 5L9 0z" fill="#666" /></svg></VBtn>
        </VScroll>
      </SheetArea>

      <SheetTabs>
        <NavSlot>
          <svg width="6" height="9" viewBox="0 0 6 9"><path d="M5 0v9L0 4.500z" fill="#bbb" /></svg>
          <svg width="6" height="9" viewBox="0 0 6 9"><path d="M1 0v9l5-4.500z" fill="#bbb" /></svg>
        </NavSlot>
        <DataTab>Data</DataTab>
        <AddSheet><svg width="9" height="9" viewBox="0 0 9 9"><path d="M4.500 0v9M0 4.500h9" stroke="#c0c0c0" strokeWidth="1.500" /></svg></AddSheet>
        <SplitDots><i /><i /><i /></SplitDots>
        <HScroll>
          <HEnd><svg width="5" height="9" viewBox="0 0 5 9"><path d="M5 0v9L0 4.500z" fill="#666" /></svg></HEnd>
          <HThumb />
          <HEndR><svg width="5" height="9" viewBox="0 0 5 9"><path d="M0 0v9l5-4.500z" fill="#666" /></svg></HEndR>
        </HScroll>
      </SheetTabs>

      <StatusBar>
        <StatusText $w={50}>Ready</StatusText>
        <svg width="15" height="14" viewBox="0 0 15 14" fill="none" stroke="#555"><path d="M.5.500h13v12H.5zM.5 3.500h13M3 6h5M3 8.500h3" /><circle cx="10.500" cy="9" r="3" fill="#fff" /><circle cx="10.500" cy="9" r="1" fill="#555" /></svg>
        <svg width="15" height="15" viewBox="0 0 15 15" fill="none" stroke="#555" style={{ marginLeft: 16 }}><path d="M7 1.500A6 6 0 0 0 2 11M6 0v4M4 2h4" /><path d="M9 9l5 5M14 9l-5 5" strokeWidth="1.200" /></svg>
        <StatusText $ml={4}>Accessibility: Investigate</StatusText>
        <ViewTools>
          <ViewBtn $on>
            <svg width="14" height="15" viewBox="0 0 14 15" fill="none" stroke="#333"><path d="M.5.500h13v14H.5zM.5 5.300h13M.5 10h13M4.800.5v14M9.300.5v14" /></svg>
          </ViewBtn>
          <ViewBtn>
            <svg width="14" height="15" viewBox="0 0 14 15" fill="none" stroke="#444"><path d="M.5 1.500h13v12H.5zM3.500 4.500h7v6h-7zM3.500 7.500h7" /></svg>
          </ViewBtn>
          <ViewBtn>
            <svg width="14" height="15" viewBox="0 0 14 15" fill="none" stroke="#444"><path d="M.5.500h13v14H.5zM.5 10h7V.5" /></svg>
          </ViewBtn>
          <svg width="8" height="3" viewBox="0 0 8 3" style={{ marginLeft: 6 }}><path d="M0 1.500h8" stroke="#444" /></svg>
          <ZoomSlider />
          <svg width="9" height="9" viewBox="0 0 9 9"><path d="M0 4.500h9M4.500 0v9" stroke="#444" /></svg>
          <StatusText $ml={13}>89%</StatusText>
        </ViewTools>
      </StatusBar>

      <Taskbar>
        <WinKey><WinLogo /></WinKey>
        <TaskSearch><SearchGlass c="#222" s={16} />Type here to search</TaskSearch>
        <TaskItem $w={48}><svg width="16" height="16" viewBox="0 0 16 16"><circle cx="8" cy="8" r="6.500" fill="none" stroke="#fff" strokeWidth="2" /></svg></TaskItem>
        <TaskItem $w={47}><svg width="17" height="19" viewBox="0 0 17 19" fill="none" stroke="#fff"><path d="M1 1.500h10M1 17.500h10M1.500 5.500h10v8h-10zM15 1v4M15 7v4M15 14v3" /></svg></TaskItem>
        <TaskItem $w={48} $ml={4} $pink><ChromeIcon /></TaskItem>
        <TaskItem $w={48} $pink><UpBadge s={24} /></TaskItem>
        <TaskItem $w={47} $ml={2} $on $pink><ExcelIcon /></TaskItem>
        <TaskItem $w={49}><SnipIcon /></TaskItem>
        <Tray>
          <TrayItem $w={24}><UpBadge s={14} /></TrayItem>
          <TrayItem $w={24}><svg width="16" height="18" viewBox="0 0 16 18"><path d="M8 0l7 2.500v6c0 4-3 7-7 9-4-2-7-5-7-9v-6z" fill="#fff" /><path d="M8 0v17.500C4 15.500 1 12.500 1 8.500h14v-6z" fill="#222" opacity=".55" /><circle cx="12" cy="14" r="4" fill="#1f8a3a" /><path d="M10 14l1.500 1.500L14 13" stroke="#fff" fill="none" /></svg></TrayItem>
          <TrayItem $w={24}><svg width="14" height="16" viewBox="0 0 14 16"><rect width="14" height="16" fill="#b30b00" /><path d="M3 12c2-1 4-6 4-9 0 3 2 6 4 7-2 0-5 0-8 2z" fill="none" stroke="#fff" /></svg></TrayItem>
          <TrayItem $w={24}><svg width="14" height="20" viewBox="0 0 14 20"><rect x=".5" y=".5" width="13" height="14" fill="#8a8a8a" stroke="#ccc" /><path d="M1 17h5v2H1zM8 17h5v2H8z" fill="#aaa" /></svg></TrayItem>
          <TrayItem $w={24}><svg width="16" height="18" viewBox="0 0 16 18"><path d="M3 0l12 14-7 4C3 16 0 8 3 0z" fill="#9a9a9a" /><circle cx="9" cy="12" r="3" fill="#333" stroke="#eee" /></svg></TrayItem>
          <TrayItem $w={24}><svg width="16" height="12" viewBox="0 0 16 12" fill="none" stroke="#fff"><path d="M2 0v3M5 0v3M1 3h5v3H1zM3.500 6v5M6 3h9.500v8H3.500" /><rect x="8" y="5" width="6" height="4" fill="#fff" /></svg></TrayItem>
          <TrayItem $w={25}><svg width="16" height="14" viewBox="0 0 16 14" fill="none" stroke="#bbb"><path d="M1 14C1 7 7 1 15 1M4 14c0-5 5-10 11-10M7 14c0-3 4-7 8-7" strokeDasharray="2 1" /><circle cx="12" cy="12" r="1.500" fill="#fff" stroke="none" /></svg></TrayItem>
          <TrayItem $w={22}><svg width="16" height="14" viewBox="0 0 16 14" fill="none" stroke="#fff"><path d="M.5 4.500h3l4-3.500v12l-4-3.500h-3zM10 4c1 2 1 4 0 6M12.500 2c2 3 2 7 0 10" /></svg></TrayItem>
          <Clock>12:32 AM<br />08-May-20</Clock>
          <Notify>
            <svg width="26" height="26" viewBox="0 0 26 26"><path d="M1 1h16v14H7l-3 3v-3H1z" fill="#fff" /><path d="M4 5h10M4 8h10M4 11h6" stroke="#333" /><circle cx="16" cy="17" r="7.500" fill="#2d3f43" stroke="#999" /><text x="16" y="21" textAnchor="middle" fontSize="11" fontFamily={UI} fill="#fff">3</text></svg>
          </Notify>
        </Tray>
      </Taskbar>
    </Page>
  );
}
